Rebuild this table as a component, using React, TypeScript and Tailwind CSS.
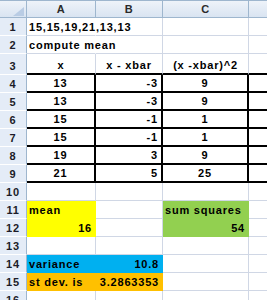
import React from "react";

type C = { t?: string; cls: string };

const base =
  "flex items-end whitespace-nowrap leading-[13px] pb-[1px] overflow-visible";
const L = "justify-start pl-[2px]";
const R = "justify-end pr-[3px]";
const M = "justify-center";

const G = "border-r border-b border-r-[#d0d7e5] border-b-[#d0d7e5]";
const GD = "border-b border-b-[#d0d7e5]";

function Cell({ t, cls }: C) {
  return (
    <div className={`${base} ${cls}`}>
      <span>{t}</span>
    </div>
  );
}

function RowHead({ n }: { n: number }) {
  return (
    <div className="flex items-end justify-center pb-[1px] leading-[13px] bg-[#e4ecf7] border-r border-r-[#9eb6ce] border-b border-b-[#ffffff] text-[#1c1c28]">
      {n}
    </div>
  );
}

function ColHead({ t, last }: { t: string; last?: boolean }) {
  return (
    <div
      className={`flex items-center justify-center bg-gradient-to-b from-[#eef3f9] to-[#d9e4f1] border-t border-t-[#9eb6ce] border-b border-b-[#9eb6ce] text-[#2a2a2a] ${
        last ? "" : "border-r border-r-[#9eb6ce]"
      }`}
    >
      {t}
    </div>
  );
}

const black = (r: boolean, b: boolean) => {
  if (r && b) return "border-r-2 border-b-2 border-r-black border-b-black";
  if (b) return "border-b-2 border-b-black";
  return "";
};

export default function App() {
  const data = [
    ["13", "-3", "9"],
    ["13", "-3", "9"],
    ["15", "-1", "1"],
    ["15", "-1", "1"],
    ["19", "3", "9"],
    ["21", "5", "25"],
  ];

  return (
    <div
      className="w-[267px] h-[300px] overflow-hidden bg-white text-[11px] font-bold tracking-[0.8px] text-black"
      style={{ fontFamily: '"Liberation Sans", Arial, sans-serif' }}
    >
      <div className="grid grid-cols-[27px_69px_67px_86px_1fr] grid-rows-[18px_18px_18px_21px_repeat(13,18px)]">
        {/* header */}
        <div className="relative bg-gradient-to-b from-[#eef3f9] to-[#d9e4f1] border-t border-t-[#9eb6ce] border-r border-r-[#9eb6ce] border-b border-b-[#9eb6ce]">
          <svg className="absolute right-[2px] bottom-[1px]" width="11" height="9" viewBox="0 0 11 9">
            <polygon points="11,0 11,9 0,9" fill="#b9cce4" />
          </svg>
        </div>
        <ColHead t="A" />
        <ColHead t="B" />
        <ColHead t="C" />
        <ColHead t="" last />

        {/* row 1 */}
        <RowHead n={1} />
        <Cell t="15,15,19,21,13,13" cls={`${L} border-r border-b border-r-white border-b-[#d0d7e5]`} />
        <Cell cls={G} />
        <Cell cls={G} />
        <Cell cls={GD} />

        {/* row 2 */}
        <RowHead n={2} />
        <Cell t="compute mean" cls={`${L} border-r border-b border-r-white border-b-[#d0d7e5]`} />
        <Cell cls={G} />
        <Cell cls={G} />
        <Cell cls={GD} />

        {/* row 3 */}
        <RowHead n={3} />
        <Cell t="x" cls={`${M} border-r border-r-[#d0d7e5] ${black(false, true)}`} />
        <Cell t="x - xbar" cls={`${M} border-r border-r-[#d0d7e5] ${black(false, true)}`} />
        <Cell t="(x -xbar)^2" cls={`${M} border-r border-r-[#d0d7e5] ${black(false, true)}`} />
        <Cell cls={black(false, true)} />

        {data.map((r, i) => (
          <React.Fragment key={i}>
            <RowHead n={i + 4} />
            <Cell t={r[0]} cls={`${M} ${black(true, true)}`} />
            <Cell t={r[1]} cls={`${R} ${black(true, true)}`} />
            <Cell t={r[2]} cls={`${M} ${black(true, true)}`} />
            <Cell cls={black(false, true)} />
          </React.Fragment>
        ))}

        {/* row 10 */}
        <RowHead n={10} />
        <Cell cls={G} />
        <Cell cls={G} />
        <Cell cls={G} />
        <Cell cls={GD} />

        {/* row 11 */}
        <RowHead n={11} />
        <Cell t="mean" cls={`${L} bg-[#ffff00] border-r border-b border-r-[#ffff00] border-b-[#ffff00]`} />
        <Cell cls={G} />
        <Cell t="sum squares" cls={`${L} bg-[#92d050] border-r border-b border-r-[#92d050] border-b-[#92d050]`} />
        <Cell cls={GD} />

        {/* row 12 */}
        <RowHead n={12} />
        <Cell t="16" cls={`${R} bg-[#ffff00] border-r border-b border-r-[#ffff00] border-b-[#ffff00]`} />
        <Cell cls={G} />
        <Cell t="54" cls={`${R} bg-[#92d050] border-r border-b border-r-[#92d050] border-b-[#92d050]`} />
        <Cell cls={GD} />

        {/* row 13 */}
        <RowHead n={13} />
        <Cell cls={G} />
        <Cell cls={G} />
        <Cell cls={G} />
        <Cell cls={GD} />

        {/* row 14 */}
        <RowHead n={14} />
        <Cell t="variance" cls={`${L} bg-[#00b0f0] border-r border-b border-r-[#00b0f0] border-b-[#00b0f0]`} />
        <Cell t="10.8" cls={`${R} bg-[#00b0f0] border-r border-b border-r-[#00b0f0] border-b-[#00b0f0]`} />
        <Cell cls={G} />
        <Cell cls={GD} />

        {/* row 15 */}
        <RowHead n={15} />
        <Cell t="st dev. is" cls={`${L} bg-[#ffc000] border-r border-b border-r-[#ffc000] border-b-[#ffc000]`} />
        <Cell t="3.2863353" cls={`${R} bg-[#ffc000] border-r border-b border-r-[#ffc000] border-b-[#ffc000]`} />
        <Cell cls={G} />
        <Cell cls={GD} />

        {/* row 16 */}
        <RowHead n={16} />
        <Cell cls={G} />
        <Cell cls={G} />
        <Cell cls={G} />
        <Cell cls={GD} />
      </div>
    </div>
  );
}
